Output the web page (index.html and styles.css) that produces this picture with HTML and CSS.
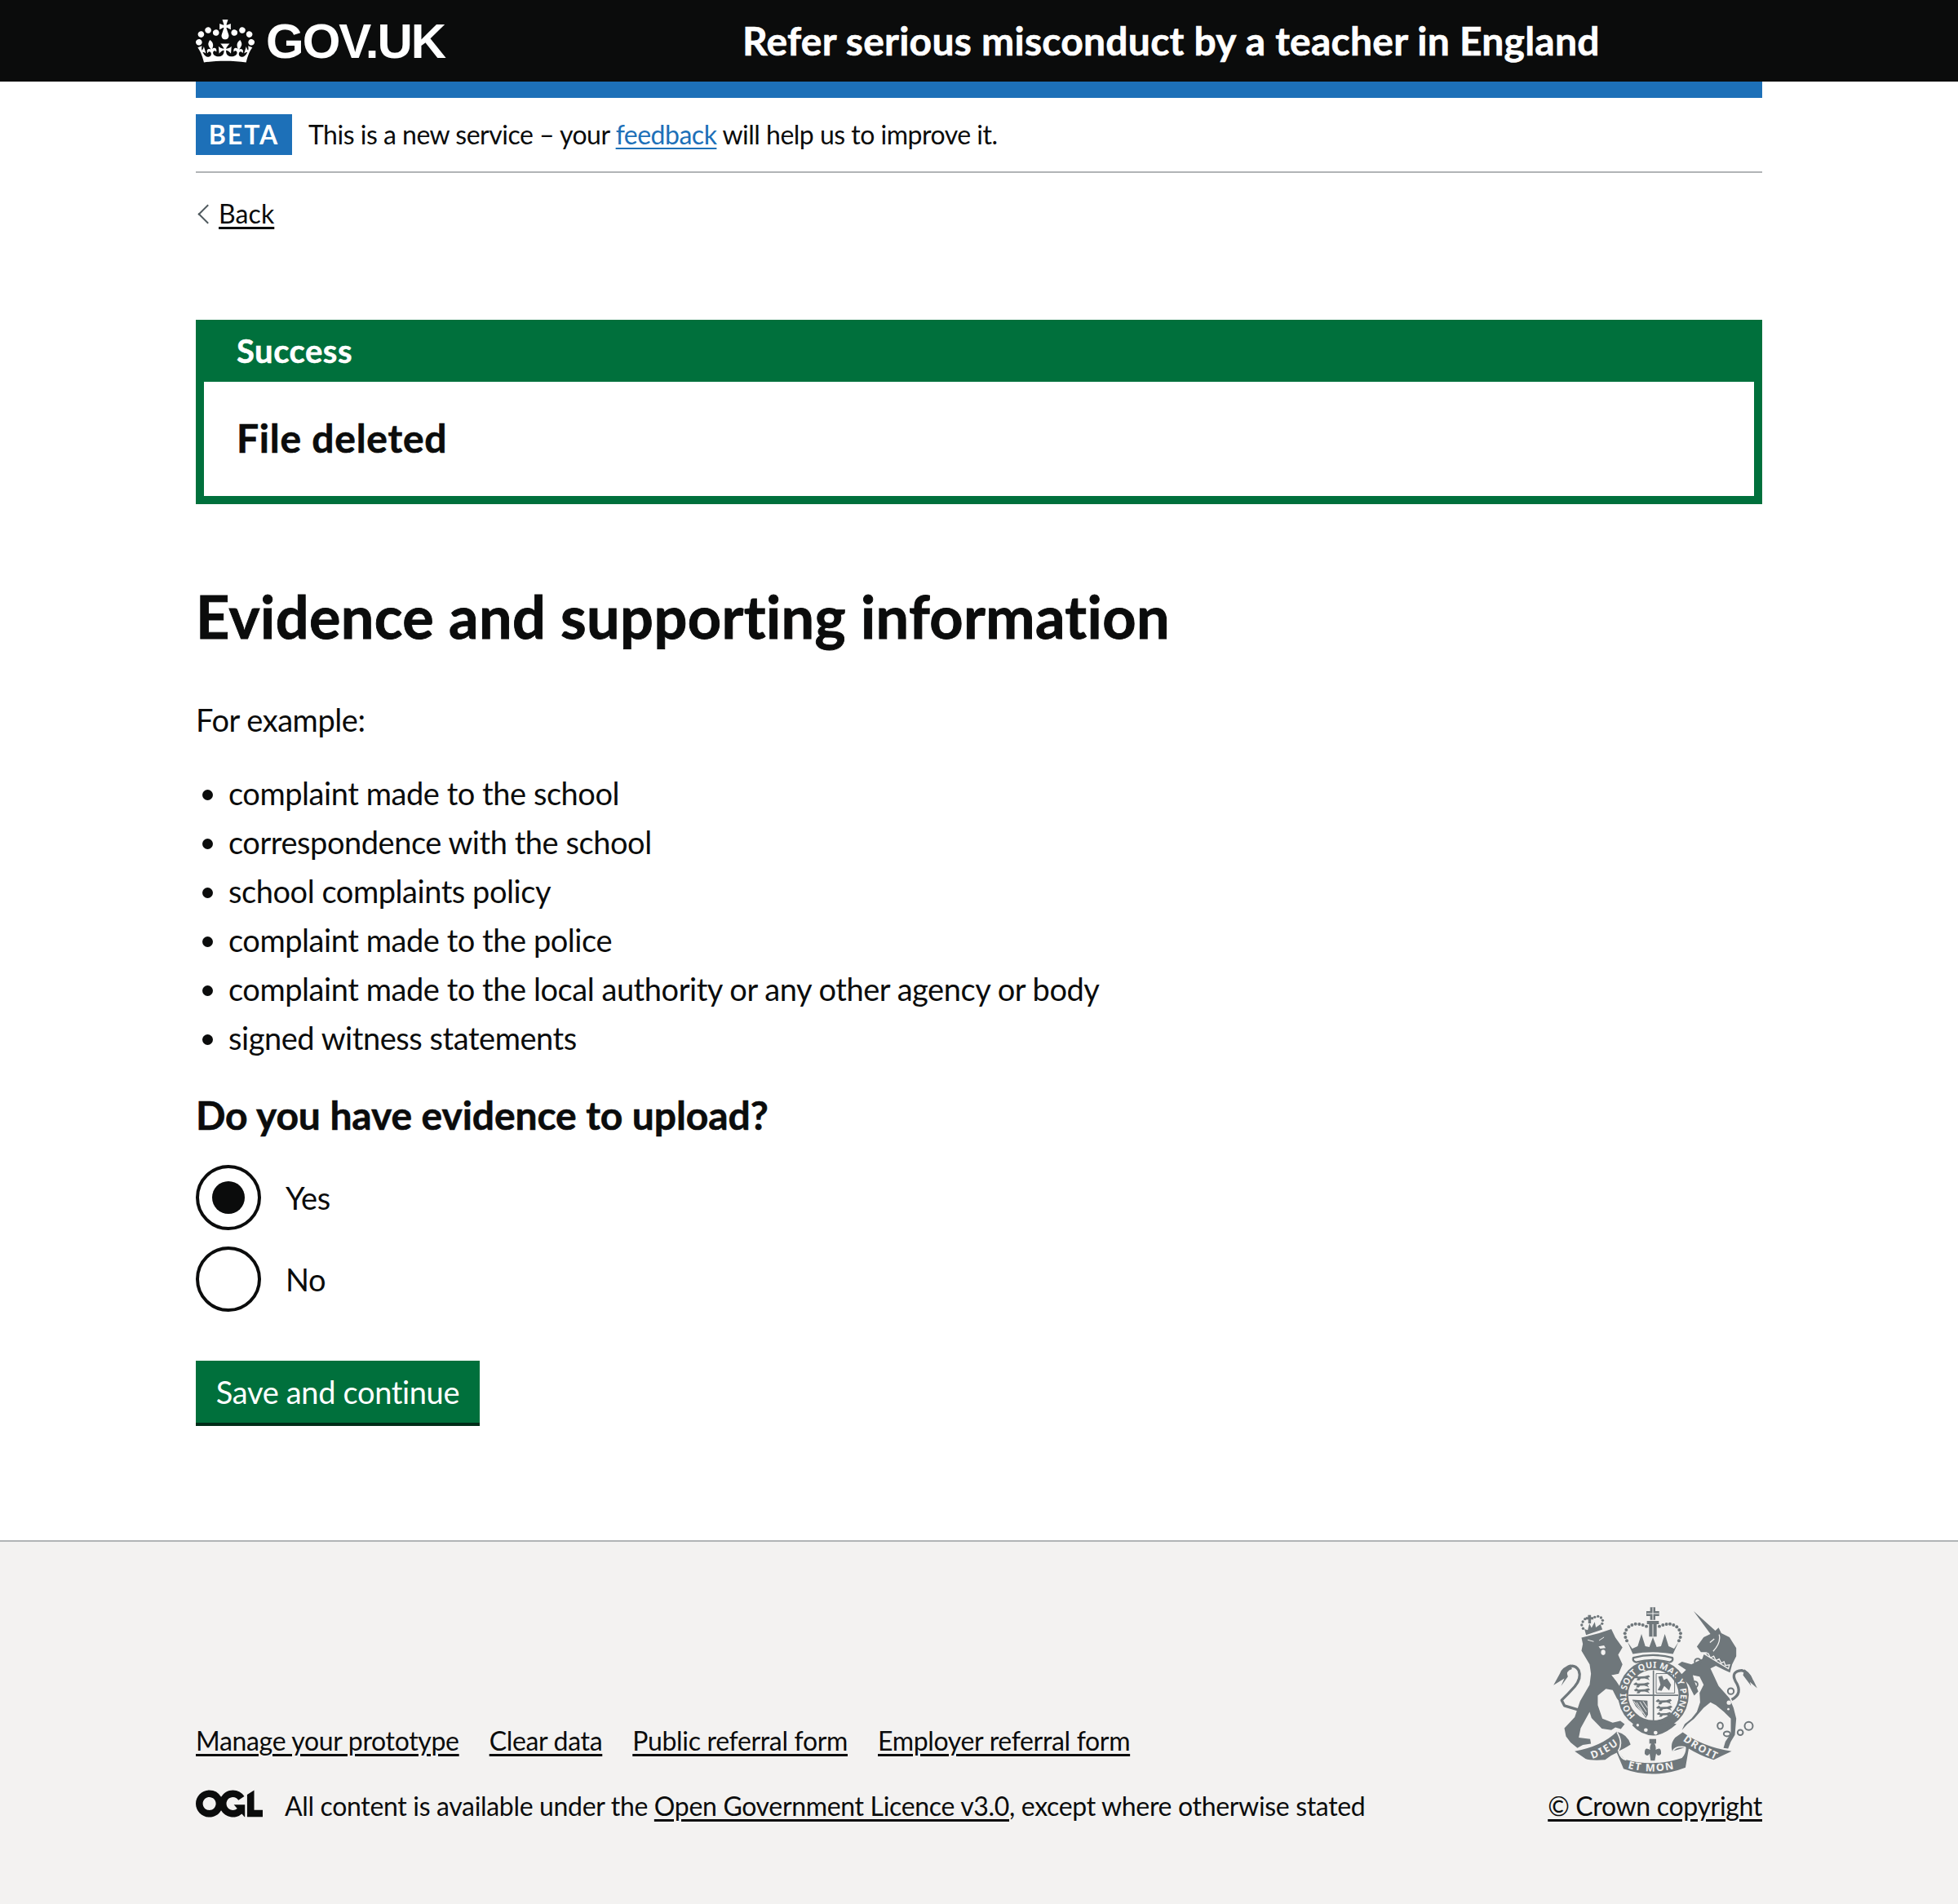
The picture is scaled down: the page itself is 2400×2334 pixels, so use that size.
FILE: index.html
```html
<!DOCTYPE html>
<html lang="en">
<head>
    <meta charset="UTF-8">
    <meta name="viewport" content="width=device-width, initial-scale=1.0">
    <title>Evidence and supporting information - Refer serious misconduct by a teacher in England</title>
    <link rel="stylesheet" href="styles.css">
</head>
<body>
    <header class="header">
        <div class="container header-inner">
            <a class="logo" href="#">
                <svg class="logo-crown" viewBox="0 0 132 97" aria-hidden="true"><path fill="currentColor" fill-rule="evenodd" d="M25 30.2c3.5 1.5 7.7-.2 9.1-3.7 1.5-3.6-.2-7.8-3.9-9.2-3.6-1.4-7.6.3-9.1 3.9-1.4 3.5.3 7.5 3.9 9zM9 39.5c3.6 1.5 7.8-.2 9.2-3.7 1.5-3.6-.2-7.8-3.9-9.1-3.6-1.5-7.6.2-9.1 3.8-1.4 3.5.3 7.5 3.8 9zM4.4 57.2c3.5 1.5 7.7-.2 9.1-3.8 1.5-3.6-.2-7.7-3.9-9.1-3.5-1.5-7.6.3-9.1 3.8-1.4 3.5.3 7.6 3.9 9.1zm38.3-21.4c3.5 1.5 7.7-.2 9.1-3.8 1.5-3.6-.2-7.7-3.9-9.1-3.6-1.5-7.6.3-9.1 3.8-1.3 3.6.4 7.7 3.9 9.1zm64.4-5.6c-3.6 1.5-7.8-.2-9.1-3.7-1.5-3.6.2-7.8 3.8-9.2 3.6-1.4 7.7.3 9.2 3.9 1.3 3.5-.4 7.5-3.9 9zm15.9 9.3c-3.6 1.5-7.7-.2-9.1-3.7-1.5-3.6.2-7.8 3.7-9.1 3.6-1.5 7.7.2 9.2 3.8 1.5 3.5-.3 7.5-3.8 9zm4.7 17.7c-3.6 1.5-7.8-.2-9.2-3.8-1.5-3.6.2-7.7 3.9-9.1 3.6-1.5 7.7.3 9.2 3.8 1.3 3.5-.4 7.6-3.9 9.1zM89.3 35.8c-3.6 1.5-7.8-.2-9.2-3.8-1.4-3.6.2-7.7 3.9-9.1 3.6-1.5 7.7.3 9.2 3.8 1.4 3.6-.3 7.7-3.9 9.1zM69.7 17.7l8.9 4.7V9.3l-8.9 2.8c-.2-.3-.5-.6-.9-.9L72.4 0H59.6l3.5 11.2c-.3.3-.6.5-.9.9l-8.8-2.8v13.1l8.8-4.7c.3.3.6.7.9.9l-5 15.4v.1c-.2.8-.4 1.6-.4 2.4 0 4.1 3.1 7.5 7 8.1h.2c.3 0 .7.1 1 .1.4 0 .7 0 1-.1h.2c4-.6 7.1-4.1 7.1-8.1 0-.8-.1-1.7-.4-2.4V34l-5.1-15.4c.4-.2.7-.6 1-.9zM66 92.8c16.9 0 32.8 1.1 47.1 3.2 4-16.9 8.9-26.7 14-33.5l-9.6-3.4c1 4.9 1.1 7.2 0 10.2-1.5-1.4-3-4.3-4.2-8.7L108.6 76c2.8-2 5-3.2 7.5-3.3-4.4 9.4-10 11.9-13.6 11.2-4.3-.8-6.3-4.6-5.6-7.9 1-4.7 5.7-5.9 8-.5 4.3-8.7-3-11.4-7.6-8.8 7.1-7.2 7.9-13.5 2.1-21.1-8 6.1-8.1 12.3-4.5 20.8-4.7-5.4-12.1-2.5-9.5 6.2 3.4-5.2 7.9-2 7.2 3.1-.6 4.3-6.4 7.8-13.5 7.2-10.3-.9-10.9-8-11.2-13.8 2.5-.5 7.1 1.8 11 7.3L80.2 60c-4.1 4.4-8 5.3-12.3 5.4 1.4-4.4 8-11.6 8-11.6H55.5s6.4 7.2 7.9 11.6c-4.2-.1-8-1-12.3-5.4l1.4 16.4c3.9-5.5 8.5-7.7 10.9-7.3-.3 5.8-.9 12.8-11.1 13.8-7.2.6-12.9-2.9-13.5-7.2-.7-5 3.8-8.3 7.1-3.1 2.7-8.7-4.6-11.6-9.4-6.2 3.7-8.5 3.6-14.7-4.6-20.8-5.8 7.6-5 13.9 2.2 21.1-4.7-2.6-11.9.1-7.7 8.8 2.3-5.5 7.1-4.2 8.1.5.7 3.3-1.3 7.1-5.7 7.9-3.5.7-9-1.8-13.5-11.2 2.5.1 4.7 1.3 7.5 3.3l-4.7-15.4c-1.2 4.4-2.7 7.2-4.3 8.7-1.1-3-.9-5.3 0-10.2l-9.5 3.4c5 6.9 9.9 16.7 14 33.5 14.8-2.1 30.8-3.2 47.7-3.2z"/></svg>
                <span class="logo-text">GOV.UK</span>
            </a>
            <a class="service-name" href="#">Refer serious misconduct by a teacher in England</a>
        </div>
    </header>

    <div class="container">
        <div class="header-rule"></div>
        <div class="phase-banner">
            <strong class="phase-tag">Beta</strong>
            <span class="phase-text">This is a new service – your <a class="link" href="#">feedback</a> will help us to improve it.</span>
        </div>
        <a class="back-link" href="#">Back</a>

        <main>
            <div class="banner">
                <h2 class="banner-title">Success</h2>
                <div class="banner-body">File deleted</div>
            </div>

            <h1 class="heading-l">Evidence and supporting information</h1>
            <p class="body-text">For example:</p>
            <ul class="list">
                <li>complaint made to the school</li>
                <li>correspondence with the school</li>
                <li>school complaints policy</li>
                <li>complaint made to the police</li>
                <li>complaint made to the local authority or any other agency or body</li>
                <li>signed witness statements</li>
            </ul>

            <form>
                <fieldset class="fieldset">
                    <legend class="legend">Do you have evidence to upload?</legend>
                    <div class="radios">
                        <label class="radio"><input type="radio" name="evidence" checked><span>Yes</span></label>
                        <label class="radio"><input type="radio" name="evidence"><span>No</span></label>
                    </div>
                </fieldset>
                <button class="button" type="button">Save and continue</button>
            </form>
        </main>
    </div>

    <footer class="footer">
        <div class="container footer-inner">
            <div class="footer-left">
                <ul class="footer-links">
                    <li><a href="#">Manage your prototype</a></li>
                    <li><a href="#">Clear data</a></li>
                    <li><a href="#">Public referral form</a></li>
                    <li><a href="#">Employer referral form</a></li>
                </ul>
                <div class="licence">
                    <svg class="ogl" viewBox="0 0 483.2 195.7" aria-hidden="true"><path fill="currentColor" d="M421.5 142.8V.1l-50.7 32.3v161.1h112.4v-50.7zm-122.3-9.6A47.12 47.12 0 0 1 221 97.8c0-26 21.1-47.1 47.1-47.1 16.7 0 31.4 8.7 39.7 21.8l42.7-27.2A97.63 97.63 0 0 0 268.1 0c-36.5 0-68.3 20.1-85.1 49.7A98 98 0 0 0 97.8 0C43.9 0 0 43.9 0 97.8s43.9 97.8 97.8 97.8c36.5 0 68.3-20.1 85.1-49.7a97.76 97.76 0 0 0 149.6 25.4l19.4 22.2h3v-87.8h-80l24.3 27.5zM97.8 145c-26 0-47.1-21.1-47.1-47.1s21.1-47.1 47.1-47.1 47.2 21 47.2 47S123.8 145 97.8 145"/></svg>
                    <span>All content is available under the <a href="#">Open Government Licence v3.0</a>, except where otherwise stated</span>
                </div>
            </div>
            <div class="footer-right">
                <svg class="crest" viewBox="60 50 780 640" aria-hidden="true">
                    <defs>
                        <path id="passant" d="M0 7 L10 0 L16 5 L40 4 L54 0 L60 5 L52 10 L58 19 L50 15 L40 12 L25 13 L20 19 L10 19 L14 11 L5 11 Z"/>
                        <path id="garterArc" d="M374 458 A100 100 0 1 1 506 458"/>
                        <path id="dieuArc" d="M215 618 Q270 600 325 554"/>
                        <path id="monArc" d="M345 652 Q440 677 535 650"/>
                        <path id="droitArc" d="M548 550 Q600 590 680 626"/>
                    </defs>

                    <!-- lion -->
                    <path class="crest-fill" d="M175 172 L240 155 L285 140 L300 172 L326 208 L310 235 L326 270 L312 305 L286 310 L302 330 L338 385 L350 405 L342 425 L325 422 L305 395 L290 365 L265 360 L235 385 L235 420 L252 470 L290 485 L318 478 L334 490 L320 508 L300 502 L285 512 L250 507 L212 468 L205 445 L172 505 L165 540 L207 545 L210 562 L180 567 L160 578 L135 558 L118 535 L112 505 L150 465 L170 405 L205 345 L210 305 L205 270 L175 220 L180 195 Z"/>
                    <path class="crest-line" stroke-width="10" d="M165 438 L112 422 L102 402 Q125 380 150 352 Q176 320 165 292 Q150 268 125 280"/>
                    <path class="crest-fill" d="M135 270 Q100 282 95 305 L72 347 L112 322 L100 350 L125 315 Q115 295 140 287 Z"/>
                    <path class="crest-cut" stroke-width="3" d="M198 180 L220 186 M258 170 L240 182 M288 310 L330 360"/>
                    <ellipse class="crest-bg" cx="255" cy="226" rx="8" ry="10"/>
                    <path class="crest-bg" d="M238 204 L258 200 L264 210 L244 212 Z"/>
                    <!-- lion crown -->
                    <path class="crest-fill" d="M186 140 L192 162 L252 142 L245 122 L228 134 L224 114 L212 136 L204 120 L198 144 Z"/>
                    <path class="crest-fill" d="M199 88 h11 v8 h9 v9 h-9 v14 h-10 v-14 h-9 v-9 h8 Z"/>
                    <g class="crest-fill">
                        <circle cx="176" cy="125" r="5"/><circle cx="180" cy="113" r="5"/><circle cx="188" cy="103" r="5"/><circle cx="224" cy="96" r="5"/><circle cx="236" cy="93" r="5"/><circle cx="247" cy="98" r="5"/><circle cx="253" cy="108" r="5"/><circle cx="251" cy="120" r="5"/><circle cx="181" cy="138" r="5"/>
                    </g>

                    <!-- unicorn -->
                    <path class="crest-fill" d="M588 74 L668 146 L680 135 L690 155 L720 170 L745 210 L745 240 L730 270 L722 300 L700 290 L670 275 L650 285 L680 350 L720 395 L735 430 L745 470 L740 530 L725 555 L715 580 L698 578 L705 555 L725 525 L725 470 L700 445 L670 420 L650 410 L625 430 L590 470 L565 490 L545 512 L555 490 L580 470 L600 445 L612 410 L610 375 L625 345 L610 315 L585 310 L590 330 L605 370 L590 385 L570 345 L540 310 L560 290 L530 270 L545 260 L580 270 L620 250 L625 235 L640 225 L615 225 L600 205 L625 170 L650 158 Z"/>
                    <path class="crest-line" stroke-width="10" d="M728 400 Q772 378 742 332 Q724 296 765 292 Q790 298 800 325"/>
                    <path class="crest-fill" d="M775 288 Q800 305 822 358 L795 335 L800 350 L770 310 Z"/>
                    <path class="crest-cut" stroke-width="4" d="M628 232 L716 286 L720 272 L705 274 L700 260 L690 266 L682 250 L670 256 L662 240 L650 246 L642 230 Z M648 190 L664 176 M682 160 Q690 190 660 222"/>
                    <g class="crest-ring" stroke-width="6">
                        <circle cx="603" cy="260" r="11"/><circle cx="592" cy="344" r="11"/><circle cx="725" cy="369" r="11"/><ellipse cx="686" cy="496" rx="10" ry="12"/><ellipse cx="711" cy="526" rx="12" ry="9"/><circle cx="760" cy="521" r="10"/><circle cx="791" cy="497" r="15"/>
                    </g>
                    <circle class="crest-bg" cx="718" cy="411" r="8"/>
                    <circle class="crest-bg" cx="692" cy="451" r="8"/>
                    <circle class="crest-bg" cx="716" cy="435" r="4"/>

                    <!-- royal crown -->
                    <path class="crest-fill" d="M428 60 h19 v14 h14 v18 h-14 v14 h-19 v-14 h-14 v-18 h14 Z"/>
                    <path class="crest-fill" d="M416 110 h44 v12 h-8 v46 h-28 v-46 h-8 Z"/>
                    <path class="crest-cut" stroke-width="3" d="M438 60 V106 M416 83 H460 M438 122 V168"/>
                    <g class="crest-fill">
                        <circle cx="337" cy="170" r="6"/><circle cx="335" cy="156" r="6"/><circle cx="340" cy="143" r="6"/><circle cx="349" cy="132" r="6"/><circle cx="361" cy="125" r="6"/><circle cx="374" cy="121" r="6"/><circle cx="388" cy="122" r="6"/><circle cx="401" cy="125" r="6"/><circle cx="414" cy="130" r="6"/>
                        <circle cx="462" cy="130" r="6"/><circle cx="475" cy="125" r="6"/><circle cx="488" cy="122" r="6"/><circle cx="501" cy="121" r="6"/><circle cx="514" cy="125" r="6"/><circle cx="526" cy="132" r="6"/><circle cx="535" cy="143" r="6"/><circle cx="540" cy="156" r="6"/><circle cx="539" cy="170" r="6"/><circle cx="342" cy="183" r="6"/><circle cx="534" cy="183" r="6"/>
                    </g>
                    <path class="crest-fill" d="M345 188 L362 212 L382 203 L396 158 L410 203 L425 206 L438 170 L452 206 L468 203 L482 158 L496 203 L516 212 L532 188 L512 232 Q438 218 364 232 Z"/>
                    <path class="crest-line" stroke-width="7" d="M366 246 Q438 226 510 246 Q514 258 500 262 Q438 246 376 262 Q362 258 366 246 Z"/>

                    <!-- garter and shield -->
                    <circle class="crest-fill" cx="440" cy="383" r="130"/>
                    <circle class="crest-bg" cx="440" cy="383" r="93"/>
                    <text class="crest-text crest-text-sm"><textPath href="#garterArc" textLength="478" lengthAdjust="spacing">HONI SOIT QUI MAL Y PENSE</textPath></text>
                    <path class="crest-line" stroke-width="5" d="M440 292 V480 M348 384 H532"/>
                    <use class="crest-fill" href="#passant" transform="translate(368 310)"/>
                    <use class="crest-fill" href="#passant" transform="translate(366 336)"/>
                    <use class="crest-fill" href="#passant" transform="translate(368 358)"/>
                    <use class="crest-fill" href="#passant" transform="translate(448 398)"/>
                    <use class="crest-fill" href="#passant" transform="translate(450 422)"/>
                    <use class="crest-fill" href="#passant" transform="translate(452 446) scale(.9)"/>
                    <path class="crest-fill" d="M458 315 L472 312 L478 328 L490 322 L505 345 L498 366 L480 350 L470 368 L456 365 L466 345 Z"/>
                    <path class="crest-line" stroke-width="3" d="M450 304 H518 V376 H450 Z"/>
                    <path class="crest-fill" d="M362 400 L418 404 L420 455 L412 468 L395 445 L375 425 Z"/>
                    <path class="crest-cut" stroke-width="3" d="M378 410 L412 462 M390 408 L414 445 M402 406 L418 430 M368 406 L400 450"/>
                    <!-- garter buckle -->
                    <path class="crest-fill" d="M362 495 Q368 478 395 474 Q440 510 495 482 L525 490 Q480 530 440 532 Q395 532 362 495 Z"/>
                    <circle class="crest-bg" cx="412" cy="512" r="7"/>
                    <circle class="crest-bg" cx="448" cy="522" r="7"/>
                    <circle class="crest-bg" cx="382" cy="494" r="5"/>

                    <!-- motto -->
                    <path class="crest-fill" d="M150 590 Q250 572 305 518 Q345 528 356 565 Q330 582 310 590 Q322 610 335 620 Q440 650 545 615 Q560 600 560 575 L510 590 Q500 565 520 540 L548 520 Q625 575 728 590 Q695 605 662 622 Q610 605 570 580 L558 650 Q440 695 330 655 L305 595 Q280 605 262 622 Q205 625 190 618 Z"/>
                    <path class="crest-cut" stroke-width="5" d="M306 520 Q330 560 310 590 M558 575 Q520 570 512 590 M312 592 Q322 620 340 622"/>
                    <path class="crest-fill" d="M425 545 H450 V562 H425 Z"/>
                    <path class="crest-fill" d="M438 552 Q452 572 448 585 Q470 570 468 600 Q458 612 450 598 L445 625 H430 L426 598 Q418 612 408 600 Q406 570 428 585 Q424 572 438 552 Z"/>
                    <text class="crest-text"><textPath href="#dieuArc" textLength="110" lengthAdjust="spacing">DIEU</textPath></text>
                    <text class="crest-text"><textPath href="#monArc" textLength="172" lengthAdjust="spacing">ET MON</textPath></text>
                    <text class="crest-text"><textPath href="#droitArc" textLength="140" lengthAdjust="spacing">DROIT</textPath></text>
                </svg>
                <a class="copyright" href="#">© Crown copyright</a>
            </div>
        </div>
    </footer>
</body>
</html>
```
FILE: styles.css
```css
* { box-sizing: border-box; }
body {
    margin: 0;
    font-family: Lato, "Noto Sans", Arial, sans-serif;
    font-size: 38px;
    line-height: 50px;
    letter-spacing: -0.45px;
    color: #0b0c0c;
    background: #fff;
}
.container { width: 1920px; margin: 0 auto; }

/* header */
.header { background: #0b0c0c; height: 100px; color: #fff; }
.header-inner { display: flex; height: 100px; }
.header a { color: #fff; text-decoration: none; }
.logo { width: 670px; display: flex; align-items: center; }
.logo-crown { width: 72px; height: 53px; margin-right: 14px; }
.logo-text {
    font-family: "Liberation Sans", Arial, sans-serif;
    font-weight: bold;
    font-size: 60px;
    letter-spacing: -2px;
    padding-top: 2px;
}
.service-name {
    font-size: 48px;
    font-weight: bold;
    line-height: 99px;
    letter-spacing: 0.25px;
    -webkit-text-stroke: 0.6px #fff;
}
.header-rule { height: 20px; background: #1d70b8; }

/* phase banner */
.phase-banner {
    display: flex;
    align-items: center;
    padding: 20px 0;
    border-bottom: 2px solid #b1b4b6;
    font-size: 32px;
    line-height: 50px;
    letter-spacing: -0.5px;
}
.phase-tag {
    background: #1d70b8;
    color: #fff;
    width: 118px;
    height: 50px;
    margin-right: 20px;
    text-align: center;
    text-transform: uppercase;
    letter-spacing: 2px;
    font-size: 32px;
}
.link { color: #1d70b8; text-decoration-thickness: 2px; text-underline-offset: 4px; }

/* back link */
.back-link {
    position: relative;
    display: inline-block;
    margin: 30px 0 110px;
    padding-left: 28px;
    font-size: 32px;
    line-height: 40px;
    letter-spacing: 0.1px;
    color: #0b0c0c;
    vertical-align: top;
    text-underline-offset: 4px;
}
.back-link::before {
    content: "";
    position: absolute;
    left: 6px;
    top: 12px;
    width: 15px;
    height: 15px;
    border-left: 2px solid #505a5f;
    border-bottom: 2px solid #505a5f;
    transform: rotate(45deg);
}

/* notification banner */
.banner { border: 10px solid #00703c; background: #00703c; }
.banner-title {
    margin: 0;
    height: 66px;
    padding-left: 40px;
    color: #fff;
    font-size: 40px;
    line-height: 56px;
    letter-spacing: 0.5px;
    font-weight: bold;
    -webkit-text-stroke: 0.5px #fff;
}
.banner-body {
    background: #fff;
    height: 140px;
    padding-left: 40px;
    font-size: 48px;
    line-height: 138px;
    letter-spacing: 0.75px;
    font-weight: bold;
    -webkit-text-stroke: 0.6px #0b0c0c;
}

/* content */
.heading-l {
    margin: 97px 0 62px;
    font-size: 72px;
    line-height: 80px;
    letter-spacing: 0.4px;
    font-weight: bold;
    -webkit-text-stroke: 0.9px #0b0c0c;
}
.body-text { margin: 0 0 40px; }
.list { margin: 0 0 40px; padding: 0 0 0 40px; }
.list li { margin-bottom: 10px; }
.fieldset { border: 0; margin: 0; padding: 0; }
.legend {
    padding: 0;
    font-size: 48px;
    line-height: 60px;
    letter-spacing: -0.1px;
    font-weight: bold;
    margin-bottom: 31px;
    -webkit-text-stroke: 0.6px #0b0c0c;
}
.radios { display: flex; flex-direction: column; gap: 20px; }
.radio { display: flex; align-items: center; height: 80px; }
.radio input {
    appearance: none;
    width: 80px;
    height: 80px;
    margin: 0 30px 0 0;
    border: 4px solid #0b0c0c;
    border-radius: 50%;
    background: #fff;
    position: relative;
}
.radio input:checked::after {
    content: "";
    position: absolute;
    left: 16px;
    top: 16px;
    width: 40px;
    height: 40px;
    border-radius: 50%;
    background: #0b0c0c;
}
.button {
    display: block;
    margin: 60px 0 140px;
    width: 348px;
    height: 80px;
    padding: 0;
    border: 0;
    border-bottom: 4px solid #002d18;
    background: #00703c;
    color: #fff;
    font-family: inherit;
    font-size: 38px;
    letter-spacing: -0.35px;
    cursor: pointer;
}

/* footer */
.footer {
    background: #f3f2f1;
    border-top: 2px solid #b1b4b6;
    height: 446px;
    font-size: 32px;
    line-height: 40px;
    letter-spacing: -0.33px;
}
.footer a { color: #0b0c0c; text-underline-offset: 4px; }
.footer-inner { display: flex; justify-content: space-between; align-items: flex-end; height: 344px; }
.footer-links { display: flex; gap: 37px; list-style: none; margin: 0 0 40px; padding: 0; }
.licence { display: flex; }
.ogl { width: 82px; height: 34px; margin-right: 27px; }
.footer-right { display: flex; flex-direction: column; align-items: flex-end; }
.crest { width: 260px; height: 213px; margin-bottom: 14px; }
.crest-fill { fill: #6f777b; }
.crest-bg { fill: #f3f2f1; }
.crest-line { fill: none; stroke: #6f777b; stroke-linejoin: round; }
.crest-cut { fill: none; stroke: #f3f2f1; }
.crest-ring { fill: none; stroke: #6f777b; }
.crest-text { fill: #f3f2f1; font-family: "Noto Sans", sans-serif; font-weight: bold; font-size: 38px; letter-spacing: 0; }
.crest-text-sm { font-size: 32px; }
```
